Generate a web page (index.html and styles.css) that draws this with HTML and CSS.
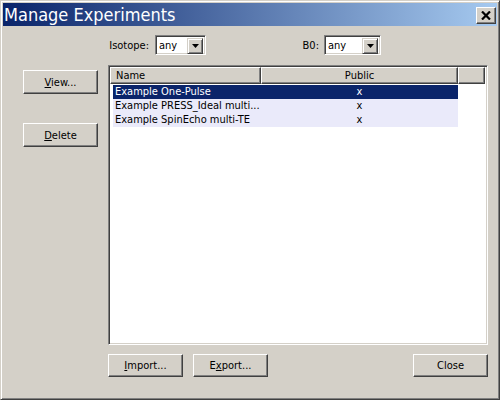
FILE: index.html
```html
<!DOCTYPE html>
<html>
<head>
<meta charset="utf-8">
<link rel="stylesheet" href="styles.css">
</head>
<body>
<div class="window">
  <div class="titlebar">
    <span class="title">Manage Experiments</span>
    <div class="close">
      <svg width="10" height="9" viewBox="0 0 10 9"><path d="M1 0.5 L9 8.5 M9 0.5 L1 8.5" stroke="#000" stroke-width="2.2" fill="none"/></svg>
    </div>
  </div>
  <div class="content">
    <div class="filters">
      <span class="flabel iso">Isotope:</span>
      <div class="combo iso-combo">
        <span class="val">any</span>
        <span class="drop"><svg width="7" height="4" viewBox="0 0 7 4"><path d="M0 0 H7 L3.5 4 Z" fill="#000"/></svg></span>
      </div>
      <span class="flabel b0">B0:</span>
      <div class="combo b0-combo">
        <span class="val">any</span>
        <span class="drop"><svg width="7" height="4" viewBox="0 0 7 4"><path d="M0 0 H7 L3.5 4 Z" fill="#000"/></svg></span>
      </div>
    </div>
    <div class="main">
      <div class="side">
        <div class="btn"><span><u>V</u>iew...</span></div>
        <div class="btn"><span><u>D</u>elete</span></div>
      </div>
      <div class="list">
        <div class="header">
          <div class="hcell c1">Name</div>
          <div class="hcell c2">Public</div>
          <div class="hcell c3"></div>
        </div>
        <div class="rows">
          <div class="row selected"><span class="name">Example One-Pulse</span><span class="pub">x</span></div>
          <div class="row"><span class="name">Example PRESS_Ideal multi...</span><span class="pub">x</span></div>
          <div class="row"><span class="name">Example SpinEcho multi-TE</span><span class="pub">x</span></div>
        </div>
      </div>
    </div>
    <div class="bottom">
      <div class="btn"><span><u>I</u>mport...</span></div>
      <div class="btn"><span>E<u>x</u>port...</span></div>
      <div class="spacer"></div>
      <div class="btn"><span>Close</span></div>
    </div>
  </div>
</div>
</body>
</html>
```

FILE: styles.css
```css
html, body {
  margin: 0;
  padding: 0;
  background: #d4d0c8;
}
body {
  font-family: "DejaVu Sans Condensed", "DejaVu Sans", sans-serif;
  font-size: 11px;
  color: #000;
}
.window {
  width: 500px;
  height: 400px;
  box-sizing: border-box;
  border: 1px solid;
  border-color: #d4d0c8 #404040 #404040 #d4d0c8;
  box-shadow: inset 1px 1px #fff, inset -1px -1px #808080;
  padding: 2px;
  background: #d4d0c8;
  display: flex;
  flex-direction: column;
}
.titlebar {
  height: 23px;
  flex: none;
  background: linear-gradient(to right, #0a246a, #a6caf0);
  display: flex;
  align-items: center;
  padding-left: 1px;
  padding-right: 1px;
}
.title {
  color: #fff;
  font-size: 18px;
  line-height: 23px;
  flex: 1;
  white-space: nowrap;
}
.close {
  width: 20px;
  height: 17px;
  box-sizing: border-box;
  background: #d4d0c8;
  border: 1px solid;
  border-color: #fff #404040 #404040 #fff;
  box-shadow: inset -1px -1px #808080;
  display: flex;
  align-items: center;
  justify-content: center;
  margin-top: 1px;
}
.content {
  flex: 1;
  display: flex;
  flex-direction: column;
}
.filters {
  display: flex;
  align-items: center;
  height: 20px;
  margin-top: 9px;
  padding-left: 105px;
}
.flabel {
  text-align: right;
  white-space: nowrap;
}
.flabel.iso { width: 41px; margin-right: 6px; }
.flabel.b0 { width: 40px; margin-left: 73px; margin-right: 5px; }
.combo {
  height: 20px;
  box-sizing: border-box;
  border: 1px solid;
  border-color: #808080 #fff #fff #808080;
  box-shadow: inset 1px 1px #404040, inset -1px -1px #d4d0c8;
  background: #fff;
  display: flex;
  padding: 2px;
}
.iso-combo { width: 51px; }
.b0-combo { width: 57px; }
.combo .val {
  flex: 1;
  line-height: 16px;
  padding-left: 1px;
}
.combo .drop {
  width: 16px;
  height: 16px;
  box-sizing: border-box;
  background: #d4d0c8;
  border: 1px solid;
  border-color: #d4d0c8 #404040 #404040 #d4d0c8;
  box-shadow: inset 1px 1px #fff, inset -1px -1px #808080;
  display: flex;
  align-items: center;
  justify-content: center;
}
.main {
  display: flex;
  margin-top: 10px;
  padding-left: 20px;
  height: 280px;
}
.side {
  width: 75px;
  display: flex;
  flex-direction: column;
  gap: 29px;
  padding-top: 5px;
  margin-right: 10px;
}
.btn {
  width: 75px;
  height: 24px;
  box-sizing: border-box;
  background: #d4d0c8;
  border: 1px solid;
  border-color: #fff #404040 #404040 #fff;
  box-shadow: inset -1px -1px #808080;
  display: flex;
  align-items: center;
  justify-content: center;
  flex: none;
}
.list {
  width: 380px;
  box-sizing: border-box;
  border: 1px solid;
  border-color: #808080 #fff #fff #808080;
  box-shadow: inset 1px 1px #404040, inset -1px -1px #d4d0c8;
  background: #fff;
  padding: 1px;
  display: flex;
  flex-direction: column;
}
.header {
  display: flex;
  height: 17px;
}
.hcell {
  box-sizing: border-box;
  height: 17px;
  background: #d4d0c8;
  border: 1px solid;
  border-color: #fff #404040 #404040 #fff;
  box-shadow: inset -1px -1px #808080;
  line-height: 15px;
}
.hcell.c1 { width: 151px; padding-left: 5px; }
.hcell.c2 { width: 197px; text-align: center; }
.hcell.c3 { width: 27px; }
.rows {
  padding-left: 3px;
  padding-top: 1px;
}
.row {
  width: 345px;
  height: 14px;
  line-height: 14px;
  display: flex;
  background: #eaeafa;
  white-space: nowrap;
}
.row.selected {
  background: #0a246a;
  color: #fff;
}
.row .name {
  width: 148px;
  padding-left: 2px;
  box-sizing: border-box;
  overflow: hidden;
}
.row .pub {
  width: 197px;
  text-align: center;
}
.bottom {
  display: flex;
  margin-top: 9px;
  padding-left: 105px;
  padding-right: 9px;
  gap: 10px;
}
.bottom .btn {
  height: 23px;
}
.spacer { flex: 1; }
```
